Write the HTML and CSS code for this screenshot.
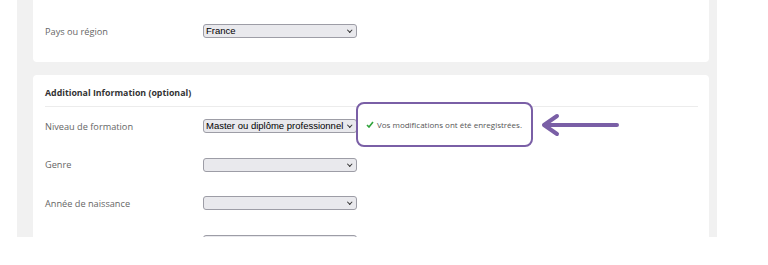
FILE: index.html
```html
<!DOCTYPE html>
<html>

<head>
  <meta charset="utf-8" />
  <title>Profil</title>
  <link rel="stylesheet" href="styles.css">
</head>

<body>
  <div class="page">
    <div class="card card-top">
      <div class="row">
        <label class="label">Pays ou région</label>
        <div class="select-wrap">
          <select>
            <option>France</option>
          </select>
        </div>
      </div>
    </div>

    <div class="card">
      <h2 class="card-title">Additional Information (optional)</h2>
      <div class="rows">
        <div class="row">
          <label class="label">Niveau de formation</label>
          <div class="select-wrap">
            <select>
              <option>Master ou diplôme professionnel</option>
            </select>
          </div>
        </div>
        <div class="row">
          <label class="label">Genre</label>
          <div class="select-wrap">
            <select>
              <option></option>
            </select>
          </div>
        </div>
        <div class="row">
          <label class="label">Année de naissance</label>
          <div class="select-wrap">
            <select>
              <option></option>
            </select>
          </div>
        </div>
        <div class="row">
          <label class="label"></label>
          <div class="select-wrap">
            <select>
              <option></option>
            </select>
          </div>
        </div>
      </div>
    </div>

    <!-- annotation -->
    <div class="callout">
      <svg class="check" width="8" height="7" viewBox="0 0 8 7">
        <path d="M1 4 L3 6 L7 1" fill="none" stroke="#2fa33a" stroke-width="1.6" />
      </svg>
      Vos modifications ont été enregistrées.
    </div>
    <svg class="pointer" width="80" height="24" viewBox="0 0 80 24">
      <path d="M3 12 H76 M3 12 L16 3 M3 12 L16 21" fill="none" stroke="#7a5fa6" stroke-width="4" stroke-linecap="round" stroke-linejoin="round" />
    </svg>
  </div>
</body>

</html>
```

FILE: styles.css
```css
body {
  margin: 0;
  background: #ffffff;
  font-family: "Open Sans", Arial, sans-serif;
  color: #666;
}

.page {
  position: relative;
  width: 676px;
  height: 237px;
  margin-left: 17px;
  padding: 0 8px 0 16px;
  background: #f1f1f1;
  overflow: hidden;
}

.card {
  background: #ffffff;
  border-radius: 4px;
  padding: 11px 11px 0 12px;
  margin-top: 13px;
}

.card-top {
  margin-top: 0;
  border-radius: 0 0 4px 4px;
  padding-top: 24px;
  padding-bottom: 24px;
}

.card-title {
  margin: 0;
  padding-bottom: 6px;
  border-bottom: 1px solid #ececec;
  font-size: 8.8px;
  line-height: 14px;
  font-weight: bold;
  color: #333;
}

.rows {
  display: flex;
  flex-direction: column;
  gap: 24.5px;
  padding-top: 12px;
  padding-bottom: 30px;
}

.row {
  display: flex;
  align-items: center;
  height: 14px;
}

.label {
  width: 158px;
  font-size: 9.2px;
  color: #666;
}

.select-wrap {
  position: relative;
  width: 154px;
  height: 14px;
}

.select-wrap::after {
  content: "";
  position: absolute;
  right: 6px;
  top: 4px;
  width: 2.5px;
  height: 2.5px;
  border-right: 1.2px solid #333;
  border-bottom: 1.2px solid #333;
  transform: rotate(45deg);
  pointer-events: none;
}

select {
  appearance: none;
  display: block;
  box-sizing: border-box;
  width: 100%;
  height: 14px;
  margin: 0;
  padding: 0 0 0 2px;
  border: 1px solid #9d9da6;
  border-radius: 3px;
  background: #e9e9ed;
  font-family: "Liberation Sans", Arial, sans-serif;
  font-size: 9.5px;
  line-height: 12px;
  color: #000;
}

.callout {
  position: absolute;
  left: 339px;
  top: 102px;
  width: 165px;
  height: 41px;
  padding-left: 8px;
  display: flex;
  align-items: center;
  gap: 3px;
  border: 2px solid #7a5fa6;
  border-radius: 8px;
  background: #ffffff;
  font-size: 8px;
  color: #555;
}

.pointer {
  position: absolute;
  left: 524px;
  top: 113px;
}
```
